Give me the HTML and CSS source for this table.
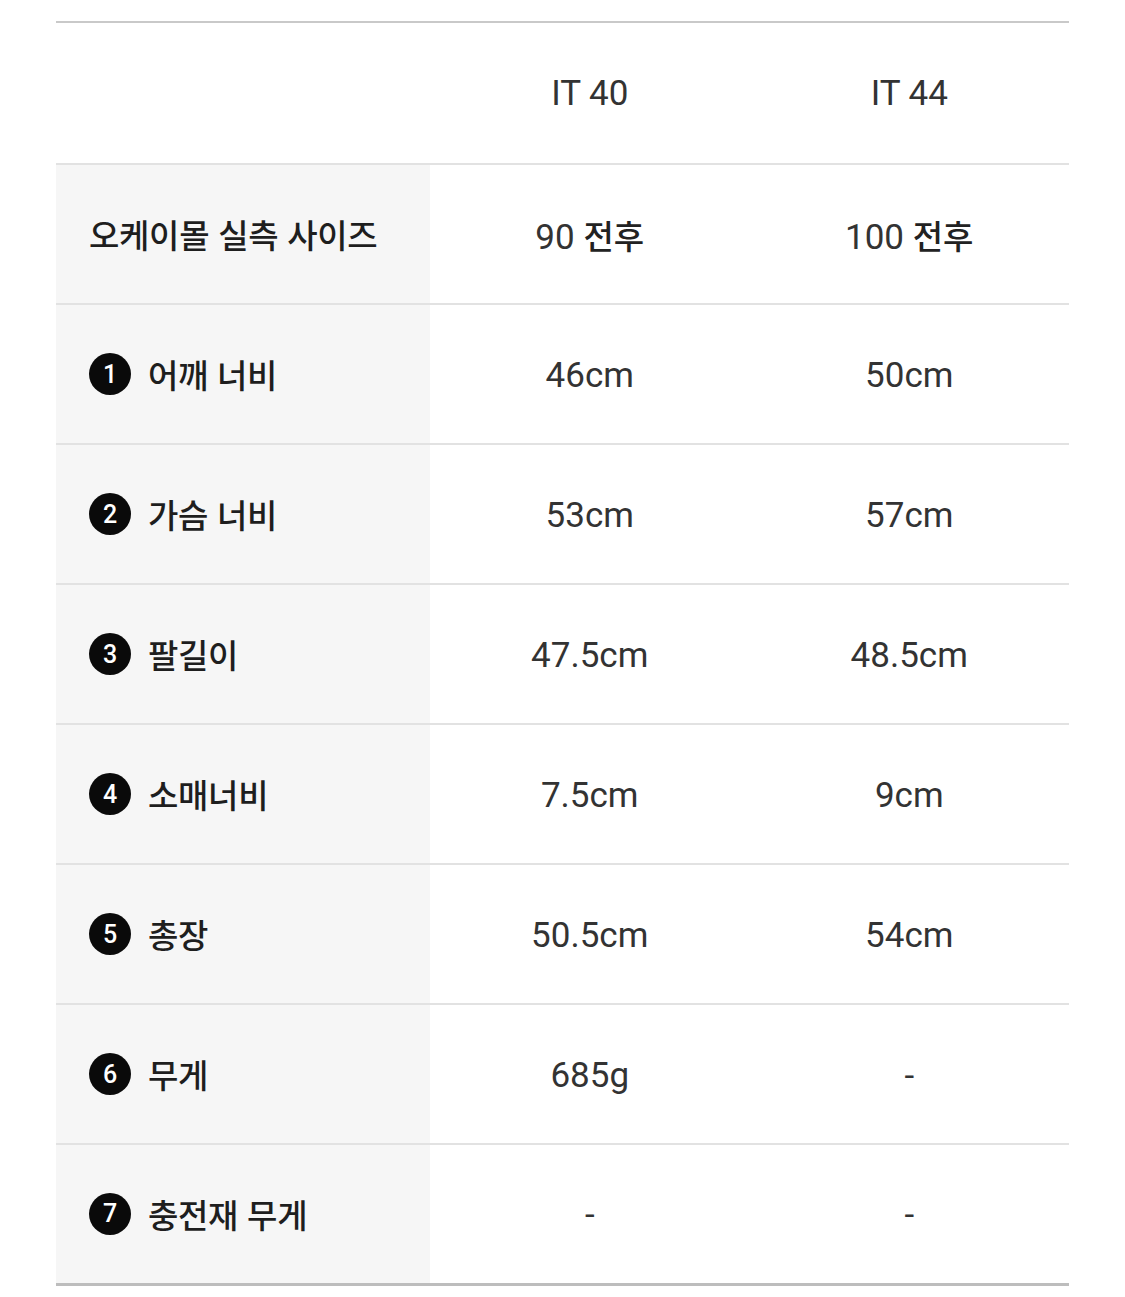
FILE: index.html
```html
<!DOCTYPE html>
<html lang="ko">
<head>
<meta charset="utf-8">
<link rel="stylesheet" href="styles.css">
</head>
<body>
<div class="page">
  <table class="size-table">
    <colgroup>
      <col class="c-label">
      <col class="c-val">
      <col class="c-val">
    </colgroup>
    <thead>
      <tr class="head">
        <th class="label-cell empty"></th>
        <th class="val">IT 40</th>
        <th class="val">IT 44</th>
      </tr>
    </thead>
    <tbody>
      <tr>
        <td class="label-cell"><span class="label">오케이몰 실측 사이즈</span></td>
        <td class="val">90 <span class="ko">전후</span></td>
        <td class="val">100 <span class="ko">전후</span></td>
      </tr>
      <tr>
        <td class="label-cell"><span class="badge">1</span><span class="label">어깨 너비</span></td>
        <td class="val">46cm</td>
        <td class="val">50cm</td>
      </tr>
      <tr>
        <td class="label-cell"><span class="badge">2</span><span class="label">가슴 너비</span></td>
        <td class="val">53cm</td>
        <td class="val">57cm</td>
      </tr>
      <tr>
        <td class="label-cell"><span class="badge">3</span><span class="label">팔길이</span></td>
        <td class="val">47.5cm</td>
        <td class="val">48.5cm</td>
      </tr>
      <tr>
        <td class="label-cell"><span class="badge">4</span><span class="label">소매너비</span></td>
        <td class="val">7.5cm</td>
        <td class="val">9cm</td>
      </tr>
      <tr>
        <td class="label-cell"><span class="badge">5</span><span class="label">총장</span></td>
        <td class="val">50.5cm</td>
        <td class="val">54cm</td>
      </tr>
      <tr>
        <td class="label-cell"><span class="badge">6</span><span class="label">무게</span></td>
        <td class="val">685g</td>
        <td class="val">-</td>
      </tr>
      <tr class="last">
        <td class="label-cell"><span class="badge">7</span><span class="label">충전재 무게</span></td>
        <td class="val">-</td>
        <td class="val">-</td>
      </tr>
    </tbody>
  </table>
</div>
</body>
</html>
```
FILE: styles.css
```css
html, body {
  margin: 0;
  padding: 0;
  background: #ffffff;
}
.page {
  padding: 21px 56px 0 56px;
}
.size-table {
  width: 1013px;
  border-collapse: collapse;
  table-layout: fixed;
  font-family: Roboto, "Noto Sans CJK KR", sans-serif;
  color: #222;
}
.c-label { width: 374px; }
.c-val { width: 319.5px; }
.size-table thead tr {
  border-top: 2px solid #c9c9c9;
  height: 142px;
}
.size-table tbody tr {
  border-top: 2px solid #e2e2e2;
  height: 140px;
}
.size-table tbody tr.last {
  border-bottom: 3px solid #bdbdbd;
}
.size-table th, .size-table td {
  padding: 0;
  vertical-align: middle;
}
.size-table td.val {
  padding-top: 2px;
}
.label-cell {
  background: #f6f6f6;
  padding-left: 33px !important;
  text-align: left;
  white-space: nowrap;
}
.label-cell.empty {
  background: #ffffff;
}
.label {
  font-family: "Noto Sans CJK KR", sans-serif;
  font-size: 33px;
  font-weight: 500;
  color: #1e1e1e;
  vertical-align: middle;
  letter-spacing: -0.3px;
}
.badge {
  display: inline-flex;
  align-items: center;
  justify-content: center;
  width: 42px;
  height: 42px;
  border-radius: 50%;
  background: #0a0a0a;
  color: #ffffff;
  font-family: Roboto, sans-serif;
  font-size: 25px;
  font-weight: 500;
  margin-right: 17px;
  vertical-align: middle;
}
.val {
  text-align: center;
  font-size: 35px;
  font-weight: 400;
  color: #333;
}
.val .ko {
  font-family: "Noto Sans CJK KR", sans-serif;
  font-size: 33px;
  font-weight: 500;
  color: #222;
}
```
